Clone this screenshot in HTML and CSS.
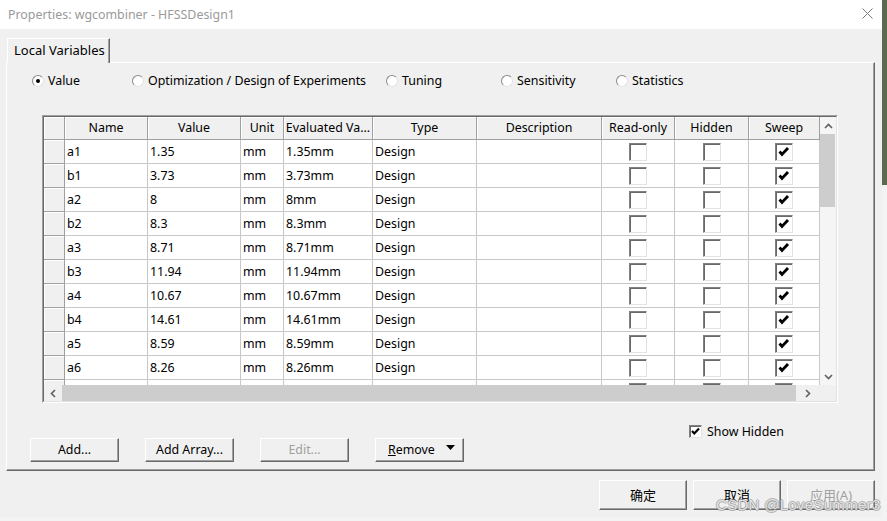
FILE: index.html
```html
<!DOCTYPE html>
<html>
<head>
<meta charset="utf-8">
<link rel="stylesheet" href="styles.css">
</head>
<body>
<div class="dialog">
  <div class="titlebar">
    <span class="title">Properties: wgcombiner - HFSSDesign1</span>
    <svg class="close" width="11" height="11" viewBox="0 0 11 11"><path d="M0.5 0.5 L10.5 10.5 M10.5 0.5 L0.5 10.5" stroke="#777" stroke-width="1" fill="none"/></svg>
  </div>
  <div class="body">
    <div class="tabs"><div class="tab">Local Variables</div></div>
    <div class="panel">
      <div class="radios">
        <div class="radio"><span class="rb on"></span>Value</div>
        <div class="radio"><span class="rb"></span>Optimization / Design of Experiments</div>
        <div class="radio"><span class="rb"></span>Tuning</div>
        <div class="radio"><span class="rb"></span>Sensitivity</div>
        <div class="radio"><span class="rb"></span>Statistics</div>
      </div>
      <div class="tablebox"><div class="tableinner">
        <div class="gridarea">
          <div class="grid">
            <div class="row head">
              <div class="c rh"></div><div class="c">Name</div><div class="c">Value</div><div class="c">Unit</div><div class="c">Evaluated Va...</div><div class="c">Type</div><div class="c">Description</div><div class="c">Read-only</div><div class="c">Hidden</div><div class="c">Sweep</div>
            </div>
            <div class="row"><div class="c rh"></div><div class="c">a1</div><div class="c">1.35</div><div class="c">mm</div><div class="c">1.35mm</div><div class="c">Design</div><div class="c"></div><div class="c cb"><span class="box"></span></div><div class="c cb"><span class="box"></span></div><div class="c cb"><span class="box"><svg viewBox="0 0 16 16"><path d="M3.5 7.5 L6 10.5 L12 4" class="chk"/></svg></span></div></div>
            <div class="row"><div class="c rh"></div><div class="c">b1</div><div class="c">3.73</div><div class="c">mm</div><div class="c">3.73mm</div><div class="c">Design</div><div class="c"></div><div class="c cb"><span class="box"></span></div><div class="c cb"><span class="box"></span></div><div class="c cb"><span class="box"><svg viewBox="0 0 16 16"><path d="M3.5 7.5 L6 10.5 L12 4" class="chk"/></svg></span></div></div>
            <div class="row"><div class="c rh"></div><div class="c">a2</div><div class="c">8</div><div class="c">mm</div><div class="c">8mm</div><div class="c">Design</div><div class="c"></div><div class="c cb"><span class="box"></span></div><div class="c cb"><span class="box"></span></div><div class="c cb"><span class="box"><svg viewBox="0 0 16 16"><path d="M3.5 7.5 L6 10.5 L12 4" class="chk"/></svg></span></div></div>
            <div class="row"><div class="c rh"></div><div class="c">b2</div><div class="c">8.3</div><div class="c">mm</div><div class="c">8.3mm</div><div class="c">Design</div><div class="c"></div><div class="c cb"><span class="box"></span></div><div class="c cb"><span class="box"></span></div><div class="c cb"><span class="box"><svg viewBox="0 0 16 16"><path d="M3.5 7.5 L6 10.5 L12 4" class="chk"/></svg></span></div></div>
            <div class="row"><div class="c rh"></div><div class="c">a3</div><div class="c">8.71</div><div class="c">mm</div><div class="c">8.71mm</div><div class="c">Design</div><div class="c"></div><div class="c cb"><span class="box"></span></div><div class="c cb"><span class="box"></span></div><div class="c cb"><span class="box"><svg viewBox="0 0 16 16"><path d="M3.5 7.5 L6 10.5 L12 4" class="chk"/></svg></span></div></div>
            <div class="row"><div class="c rh"></div><div class="c">b3</div><div class="c">11.94</div><div class="c">mm</div><div class="c">11.94mm</div><div class="c">Design</div><div class="c"></div><div class="c cb"><span class="box"></span></div><div class="c cb"><span class="box"></span></div><div class="c cb"><span class="box"><svg viewBox="0 0 16 16"><path d="M3.5 7.5 L6 10.5 L12 4" class="chk"/></svg></span></div></div>
            <div class="row"><div class="c rh"></div><div class="c">a4</div><div class="c">10.67</div><div class="c">mm</div><div class="c">10.67mm</div><div class="c">Design</div><div class="c"></div><div class="c cb"><span class="box"></span></div><div class="c cb"><span class="box"></span></div><div class="c cb"><span class="box"><svg viewBox="0 0 16 16"><path d="M3.5 7.5 L6 10.5 L12 4" class="chk"/></svg></span></div></div>
            <div class="row"><div class="c rh"></div><div class="c">b4</div><div class="c">14.61</div><div class="c">mm</div><div class="c">14.61mm</div><div class="c">Design</div><div class="c"></div><div class="c cb"><span class="box"></span></div><div class="c cb"><span class="box"></span></div><div class="c cb"><span class="box"><svg viewBox="0 0 16 16"><path d="M3.5 7.5 L6 10.5 L12 4" class="chk"/></svg></span></div></div>
            <div class="row"><div class="c rh"></div><div class="c">a5</div><div class="c">8.59</div><div class="c">mm</div><div class="c">8.59mm</div><div class="c">Design</div><div class="c"></div><div class="c cb"><span class="box"></span></div><div class="c cb"><span class="box"></span></div><div class="c cb"><span class="box"><svg viewBox="0 0 16 16"><path d="M3.5 7.5 L6 10.5 L12 4" class="chk"/></svg></span></div></div>
            <div class="row"><div class="c rh"></div><div class="c">a6</div><div class="c">8.26</div><div class="c">mm</div><div class="c">8.26mm</div><div class="c">Design</div><div class="c"></div><div class="c cb"><span class="box"></span></div><div class="c cb"><span class="box"></span></div><div class="c cb"><span class="box"><svg viewBox="0 0 16 16"><path d="M3.5 7.5 L6 10.5 L12 4" class="chk"/></svg></span></div></div>
            <div class="row"><div class="c rh"></div><div class="c"></div><div class="c"></div><div class="c"></div><div class="c"></div><div class="c"></div><div class="c"></div><div class="c cb"><span class="box"></span></div><div class="c cb"><span class="box"></span></div><div class="c cb"><span class="box"><svg viewBox="0 0 16 16"><path d="M3.5 7.5 L6 10.5 L12 4" class="chk"/></svg></span></div></div>
          </div>
          <div class="vscroll">
            <div class="arr up"><svg width="9" height="6" viewBox="0 0 9 6"><path d="M1 5 L4.5 1.5 L8 5" class="chev"/></svg></div>
            <div class="vthumb"></div>
            <div class="vtrack"></div>
            <div class="arr dn"><svg width="9" height="6" viewBox="0 0 9 6"><path d="M1 1 L4.5 4.5 L8 1" class="chev"/></svg></div>
          </div>
        </div>
        <div class="hbar">
          <div class="harr left"><svg width="6" height="9" viewBox="0 0 6 9"><path d="M5 1 L1.5 4.5 L5 8" class="chev"/></svg></div>
          <div class="hthumb"></div>
          <div class="harr right"><svg width="6" height="9" viewBox="0 0 6 9"><path d="M1 1 L4.5 4.5 L1 8" class="chev"/></svg></div>
          <div class="corner"></div>
        </div>
      </div></div>
      <div class="showhidden"><span class="sbox"><svg viewBox="0 0 11 11"><path d="M2 5 L4.3 7.5 L9 2.5" class="chk2"/></svg></span>Show Hidden</div>
      <div class="btnrow">
        <div class="btn">Add...</div>
        <div class="btn">Add Array...</div>
        <div class="btn disabled">Edit...</div>
        <div class="btn remove"><span><u>R</u>emove</span><svg width="9" height="5" viewBox="0 0 9 5"><path d="M0 0 H9 L4.5 5 Z" fill="#000"/></svg></div>
      </div>
    </div>
    <div class="footer">
      <div class="btn big">确定</div>
      <div class="btn big">取消</div>
      <div class="btn big disabled">应用(A)</div>
    </div>
  </div>
  <div class="watermark">CSDN @LoveSummer3</div>
</div>
</body>
</html>
```

FILE: styles.css
```css
html, body {
  margin: 0;
  padding: 0;
}
body {
  width: 887px;
  height: 521px;
  overflow: hidden;
  background: linear-gradient(to bottom, #5b6b52 0, #5b6b52 185px, #f3f3f3 185px);
  font-family: "Noto Sans", "Noto Sans CJK SC", sans-serif;
  font-size: 12.4px;
  color: #000;
}
.dialog {
  position: relative;
  width: 882px;
  height: 517px;
  background: #f0f0f0;
  display: flex;
  flex-direction: column;
}
.titlebar {
  height: 29px;
  background: #fff;
  display: flex;
  align-items: center;
  justify-content: space-between;
  padding: 0 9px 0 8px;
  box-sizing: border-box;
}
.title {
  color: #9a9a9a;
  font-size: 12.4px;
}
.close {
  display: block;
  margin-top: -2px;
}
.body {
  padding: 9px 7px 0 6px;
}
.tabs {
  display: flex;
  height: 24px;
}
.tab {
  position: relative;
  z-index: 1;
  margin-left: 1px;
  width: 103px;
  height: 25px;
  box-sizing: border-box;
  background: #f0f0f0;
  border-top: 1px solid #fff;
  border-left: 1px solid #fff;
  border-right: 1px solid #696969;
  box-shadow: inset -1px 0 0 #a0a0a0;
  padding-left: 6px;
  line-height: 22px;
  font-size: 13px;
}
.panel {
  height: 409px;
  box-sizing: border-box;
  border-top: 1px solid #fff;
  border-left: 1px solid #fff;
  border-right: 1px solid #696969;
  border-bottom: 1px solid #696969;
  box-shadow: inset -1px -1px 0 #a0a0a0;
  display: flex;
  flex-direction: column;
}
.radios {
  margin-top: 10px;
  height: 16px;
  padding-left: 25px;
  display: grid;
  grid-template-columns: 100px 254px 115px 115px auto;
  align-items: center;
}
.radio {
  display: flex;
  align-items: center;
  line-height: 16px;
  white-space: nowrap;
}
.rb {
  width: 12px;
  height: 12px;
  box-sizing: border-box;
  border-radius: 50%;
  border: 1px solid;
  border-color: #8a8a8a #e3e3e3 #e3e3e3 #8a8a8a;
  background: #fff;
  margin-right: 4px;
  display: flex;
  align-items: center;
  justify-content: center;
}
.rb.on::after {
  content: "";
  width: 4px;
  height: 4px;
  border-radius: 50%;
  background: #000;
}
.tablebox {
  margin-top: 26px;
  margin-left: 35px;
  width: 796px;
  height: 288px;
  box-sizing: border-box;
  border: 1px solid;
  border-color: #a0a0a0 #fff #fff #a0a0a0;
}
.tableinner {
  height: 100%;
  box-sizing: border-box;
  border: 1px solid;
  border-color: #696969 #e3e3e3 #e3e3e3 #696969;
  display: flex;
  flex-direction: column;
}
.gridarea {
  display: flex;
  height: 268px;
}
.grid {
  width: 776px;
  height: 268px;
  overflow: hidden;
  background: #fff;
}
.row {
  display: grid;
  grid-template-columns: 21px 83px 93px 43px 89px 104px 125px 73px 74px 71px;
  height: 24px;
}
.row.head {
  height: 23px;
}
.c {
  box-sizing: border-box;
  border-right: 1px solid #c8c8c8;
  border-bottom: 1px solid #c8c8c8;
  padding-left: 2px;
  line-height: 24px;
  white-space: nowrap;
  overflow: hidden;
}
.row.head .c {
  background: #f0f0f0;
  border-right: 1px solid #a0a0a0;
  border-bottom: 1px solid #a0a0a0;
  box-shadow: inset 1px 1px 0 #fff;
  text-align: center;
  padding-left: 0;
  line-height: 21px;
}
.c.rh {
  background: #f0f0f0;
  border-right: 1px solid #a0a0a0;
  border-bottom: 1px solid #a0a0a0;
  box-shadow: inset 1px 1px 0 #fff;
}
.c.cb {
  display: flex;
  align-items: center;
  justify-content: center;
  padding-left: 0;
}
.box {
  width: 18px;
  height: 18px;
  box-sizing: border-box;
  border: 1px solid;
  border-color: #808080 #e3e3e3 #e3e3e3 #808080;
  box-shadow: inset 1px 1px 0 #696969;
  background: #fff;
  display: block;
}
.box svg {
  display: block;
  width: 16px;
  height: 16px;
}
.chk {
  fill: none;
  stroke: #000;
  stroke-width: 2.8;
}
.vscroll {
  width: 16px;
  height: 268px;
  background: #f5f5f5;
  display: flex;
  flex-direction: column;
}
.arr {
  height: 17px;
  display: flex;
  align-items: center;
  justify-content: center;
}
.vthumb {
  height: 73px;
  margin-right: 1px;
  background: #cdcdcd;
}
.vtrack {
  flex: 1;
}
.chev {
  fill: none;
  stroke: #606060;
  stroke-width: 1.6;
}
.hbar {
  display: flex;
  height: 16px;
}
.harr {
  background: #f0f0f0;
  display: flex;
  align-items: center;
  justify-content: center;
}
.harr.left {
  width: 18px;
}
.harr.right {
  width: 24px;
}
.hthumb {
  width: 734px;
  background: #cdcdcd;
}
.corner {
  flex: 1;
  background: #f0f0f0;
}
.showhidden {
  margin-top: 22px;
  height: 13px;
  padding-left: 682px;
  display: flex;
  align-items: center;
  line-height: 13px;
  white-space: nowrap;
}
.sbox {
  width: 13px;
  height: 13px;
  box-sizing: border-box;
  border: 1px solid;
  border-color: #808080 #e3e3e3 #e3e3e3 #808080;
  box-shadow: inset 1px 1px 0 #696969;
  background: #fff;
  margin-right: 5px;
  display: block;
}
.sbox svg {
  display: block;
  width: 11px;
  height: 11px;
}
.chk2 {
  fill: none;
  stroke: #000;
  stroke-width: 2.2;
}
.btnrow {
  display: flex;
  gap: 26px;
  padding-left: 23px;
}
.btn {
  width: 89px;
  height: 24px;
  box-sizing: border-box;
  border: 1px solid;
  border-color: #fff #696969 #696969 #fff;
  box-shadow: inset -1px -1px 0 #a0a0a0;
  background: #f0f0f0;
  display: flex;
  align-items: center;
  justify-content: center;
  line-height: 20px;
  white-space: nowrap;
}
.btn.disabled {
  color: #a0a0a0;
}
.btn.remove {
  justify-content: space-between;
  padding: 0 8px 0 12px;
}
.btn.remove svg {
  margin-top: -6px;
}
.footer {
  display: flex;
  justify-content: flex-end;
  gap: 6px;
  padding-top: 9px;
}
.btn.big {
  width: 88px;
  height: 30px;
  font-size: 13px;
}
.watermark {
  position: absolute;
  left: 716px;
  top: 496px;
  font-family: "Liberation Sans", sans-serif;
  font-size: 15px;
  color: rgba(255, 255, 255, 0.75);
  text-shadow: -1px 0 0 rgba(140,140,140,0.6), 1px 0 0 rgba(140,140,140,0.6), 0 -1px 0 rgba(140,140,140,0.6), 0 1px 0 rgba(140,140,140,0.6);
  white-space: nowrap;
  letter-spacing: 0.3px;
}
```
